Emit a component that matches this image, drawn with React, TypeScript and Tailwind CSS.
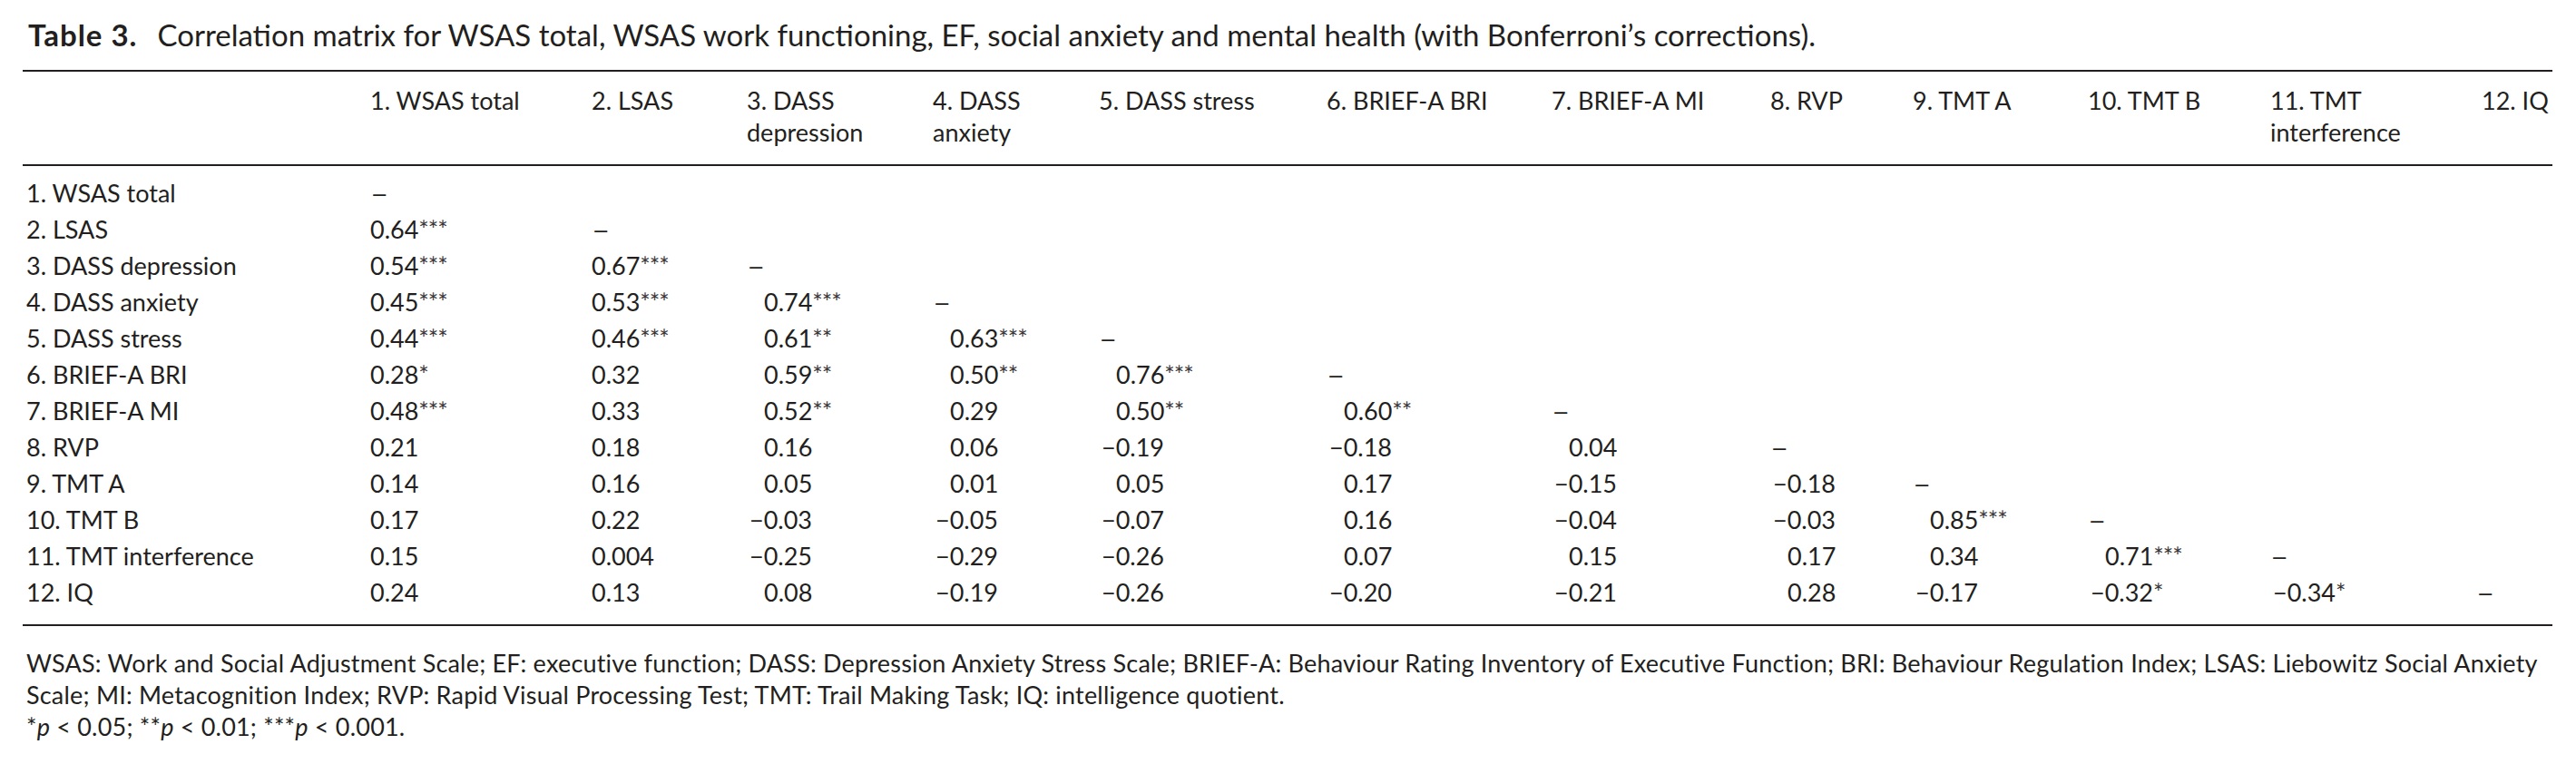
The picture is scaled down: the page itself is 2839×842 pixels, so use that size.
import React from "react";

const headers: React.ReactNode[] = [
  "",
  "1. WSAS total",
  "2. LSAS",
  <>3. DASS<br />depression</>,
  <>4. DASS<br />anxiety</>,
  "5. DASS stress",
  "6. BRIEF-A BRI",
  "7. BRIEF-A MI",
  "8. RVP",
  "9. TMT A",
  "10. TMT B",
  <>11. TMT<br />interference</>,
  "12. IQ",
];

const rows: [string, string[]][] = [
  ["1. WSAS total", ["–"]],
  ["2. LSAS", ["0.64***", "–"]],
  ["3. DASS depression", ["0.54***", "0.67***", "–"]],
  ["4. DASS anxiety", ["0.45***", "0.53***", "0.74***", "–"]],
  ["5. DASS stress", ["0.44***", "0.46***", "0.61**", "0.63***", "–"]],
  ["6. BRIEF-A BRI", ["0.28*", "0.32", "0.59**", "0.50**", "0.76***", "–"]],
  ["7. BRIEF-A MI", ["0.48***", "0.33", "0.52**", "0.29", "0.50**", "0.60**", "–"]],
  ["8. RVP", ["0.21", "0.18", "0.16", "0.06", "−0.19", "−0.18", "0.04", "–"]],
  ["9. TMT A", ["0.14", "0.16", "0.05", "0.01", "0.05", "0.17", "−0.15", "−0.18", "–"]],
  ["10. TMT B", ["0.17", "0.22", "−0.03", "−0.05", "−0.07", "0.16", "−0.04", "−0.03", "0.85***", "–"]],
  ["11. TMT interference", ["0.15", "0.004", "−0.25", "−0.29", "−0.26", "0.07", "0.15", "0.17", "0.34", "0.71***", "–"]],
  ["12. IQ", ["0.24", "0.13", "0.08", "−0.19", "−0.26", "−0.20", "−0.21", "0.28", "−0.17", "−0.32*", "−0.34*", "–"]],
];

const gridCols =
  "grid grid-cols-[383px_244px_171px_205px_183px_251px_248px_241px_157px_193px_201px_227px_84px]";

function Value({ v, col }: { v: string; col: number }) {
  if (v === "–") return <span className="inline-block origin-left scale-x-[1.3]">–</span>;
  const num = v.replace(/\*+$/, "");
  const stars = v.slice(num.length);
  // decimal points line up from the third column on
  let pad = "";
  if (col >= 2) pad = v.startsWith("−") ? "pl-[3px]" : "pl-[19px]";
  return (
    <span className={pad}>
      {num}
      {stars && <span className="tracking-[-1px] text-[#3a3637]">{stars}</span>}
    </span>
  );
}

export default function App() {
  return (
    <div className="w-[2839px] h-[842px] bg-white text-[#231f20] font-['Lato',sans-serif] overflow-hidden">
      <div className="ml-[25px] w-[2788px] pt-[18px]">
        <h1 className="pl-[6px] text-[33px] leading-[40px] whitespace-nowrap">
          <span className="font-bold tracking-[1px]">Table 3.</span>
          <span className="ml-[22px]">
            Correlation matrix for WSAS total, WSAS work functioning, EF, social anxiety and mental health (with
            Bonferroni’s corrections).
          </span>
        </h1>

        <div className="mt-[19px] border-t-2 border-[#231f20]">
          <div className={`${gridCols} text-[27px] leading-[35px] pt-[14px] pb-[18px]`}>
            {headers.map((h, i) => (
              <div key={i} className={i === 12 ? "pl-[6px] whitespace-nowrap" : "whitespace-nowrap"}>
                {h}
              </div>
            ))}
          </div>

          <div className="border-t-2 border-[#231f20] pt-[10px] pb-[15px] text-[27px] leading-[40px]">
            {rows.map(([label, vals]) => (
              <div key={label} className={gridCols}>
                <div className="pl-[4px] whitespace-nowrap">{label}</div>
                {Array.from({ length: 12 }).map((_, c) => (
                  <div key={c} className="whitespace-nowrap">
                    {vals[c] !== undefined && <Value v={vals[c]} col={c} />}
                  </div>
                ))}
              </div>
            ))}
          </div>

          <div className="border-t-2 border-[#231f20]" />
        </div>

        <div className="mt-[23px] pl-[4px] text-[27px] leading-[35px] tracking-[0.2px] whitespace-nowrap">
          <p>
            WSAS: Work and Social Adjustment Scale; EF: executive function; DASS: Depression Anxiety Stress Scale;
            BRIEF-A: Behaviour Rating Inventory of Executive Function; BRI: Behaviour Regulation Index; LSAS: Liebowitz
            Social Anxiety
          </p>
          <p>
            Scale; MI: Metacognition Index; RVP: Rapid Visual Processing Test; TMT: Trail Making Task; IQ: intelligence
            quotient.
          </p>
          <p>
            *<i>p</i> &lt; 0.05; **<i>p</i> &lt; 0.01; ***<i>p</i> &lt; 0.001.
          </p>
        </div>
      </div>
    </div>
  );
}
